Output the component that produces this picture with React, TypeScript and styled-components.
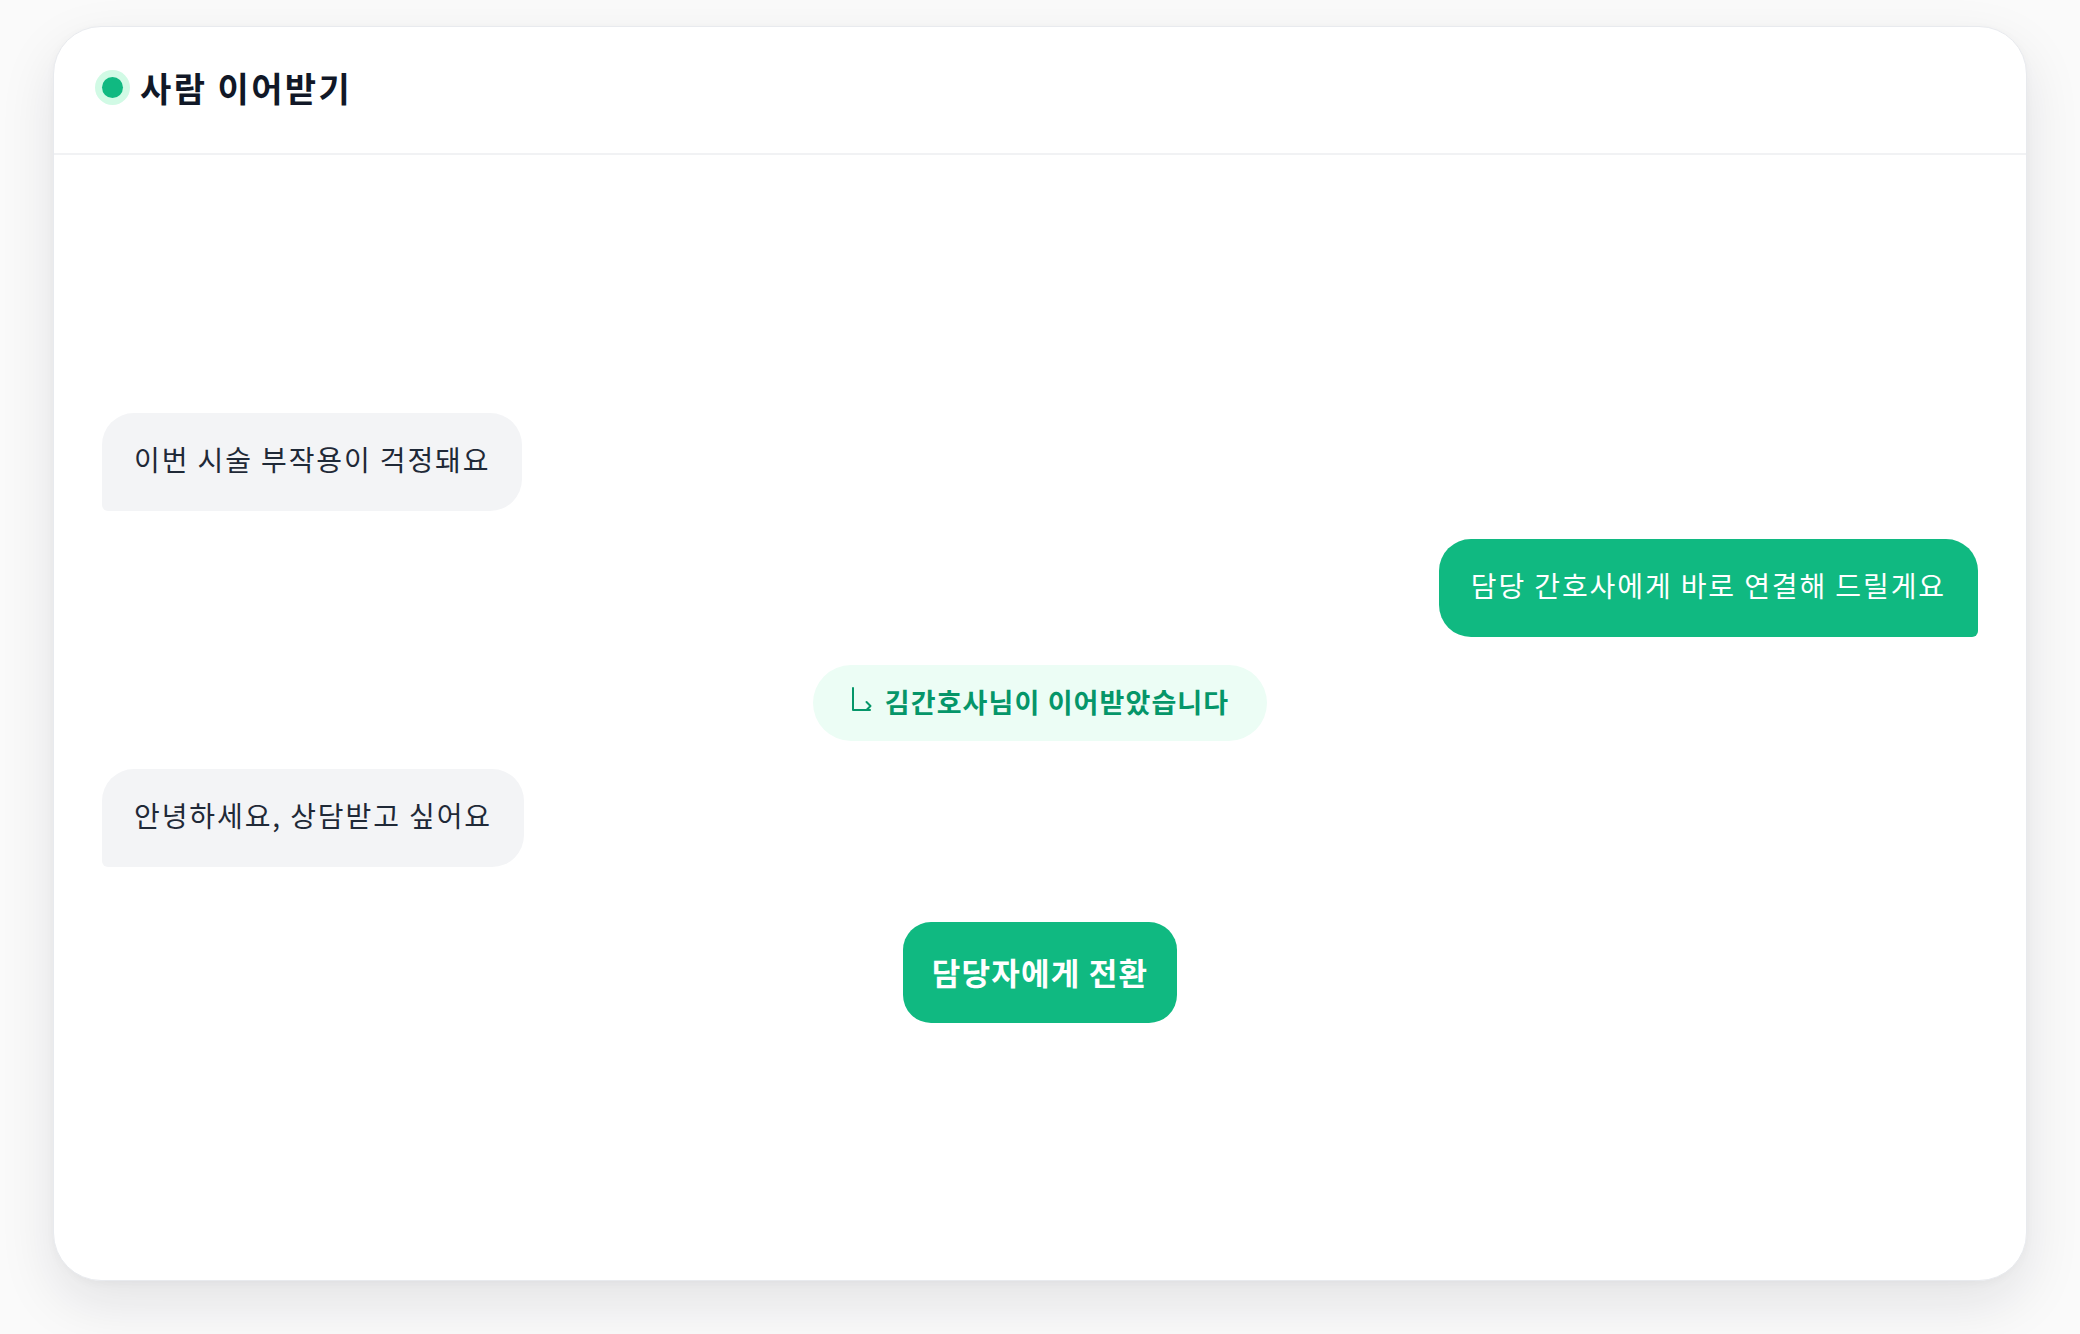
import styled, { createGlobalStyle } from "styled-components";

const GlobalStyle = createGlobalStyle`
  * {
    box-sizing: border-box;
  }

  body {
    margin: 0;
    background: #fafafa;
    font-family: "Noto Sans CJK KR", "Noto Sans", sans-serif;
    color: #1f2937;
  }
`;

type Side = "left" | "right";

const messages: { id: number; side: Side; text: string }[] = [
  { id: 1, side: "left", text: "이번 시술 부작용이 걱정돼요" },
  { id: 2, side: "right", text: "담당 간호사에게 바로 연결해 드릴게요" },
];

const HandoffArrow = () => (
  <svg width="22" height="26" viewBox="0 0 22 26" fill="none">
    <path
      d="M2 1v22h17"
      stroke="currentColor"
      strokeWidth="2"
      strokeLinecap="round"
      strokeLinejoin="round"
    />
    <path
      d="M15.5 19l4 4-4 4"
      stroke="currentColor"
      strokeWidth="2"
      strokeLinecap="round"
      strokeLinejoin="round"
      transform="translate(0 -4)"
    />
  </svg>
);

const App = () => {
  return (
    <Page>
      <GlobalStyle />
      <Card>
        <Header>
          <StatusDot />
          <Title>사람 이어받기</Title>
        </Header>
        <ChatBody>
          {messages.map((m) => (
            <Bubble key={m.id} $side={m.side}>
              {m.text}
            </Bubble>
          ))}
          <SystemNote>
            <HandoffArrow />
            김간호사님이 이어받았습니다
          </SystemNote>
          <Bubble $side="left">안녕하세요, 상담받고 싶어요</Bubble>
          <TransferButton type="button">담당자에게 전환</TransferButton>
        </ChatBody>
      </Card>
    </Page>
  );
};

export default App;

const Page = styled.div`
  padding: 26px 53px 53px;
`;

const Card = styled.div`
  height: 1255px;
  display: flex;
  flex-direction: column;
  background: #fff;
  border: 1px solid #e8eaee;
  border-radius: 48px;
  box-shadow: 0 22px 56px rgba(17, 24, 39, 0.1), 0 2px 10px rgba(17, 24, 39, 0.03);
  overflow: hidden;
`;

const Header = styled.div`
  height: 128px;
  flex-shrink: 0;
  display: flex;
  align-items: center;
  gap: 17px;
  padding: 0 48px 6px;
  border-bottom: 2px solid #f1f2f4;
`;

const StatusDot = styled.span`
  width: 21px;
  height: 21px;
  border-radius: 50%;
  background: #10b981;
  box-shadow: 0 0 0 7px #d1fae5;
`;

const Title = styled.h1`
  margin: 0;
  font-size: 34px;
  font-weight: 700;
  color: #111827;
  letter-spacing: 2.4px;
`;

const ChatBody = styled.div`
  flex: 1;
  display: flex;
  flex-direction: column;
  justify-content: center;
  gap: 28px;
  padding: 0 48px;
`;

const Bubble = styled.div<{ $side: Side }>`
  align-self: ${({ $side }) => ($side === "left" ? "flex-start" : "flex-end")};
  padding: 24px 32px 30px;
  font-size: 28px;
  line-height: 44px;
  letter-spacing: 1.9px;
  background: ${({ $side }) => ($side === "left" ? "#f3f4f6" : "#10b981")};
  color: ${({ $side }) => ($side === "left" ? "#1f2937" : "#fff")};
  border-radius: ${({ $side }) =>
    $side === "left" ? "32px 32px 32px 6px" : "32px 32px 6px 32px"};
`;

const SystemNote = styled.div`
  align-self: center;
  display: flex;
  align-items: center;
  gap: 12px;
  height: 76px;
  padding: 0 38px 3px;
  border-radius: 999px;
  background: #ecfdf5;
  color: #059669;
  font-size: 27px;
  font-weight: 700;
  letter-spacing: 1.1px;

  svg {
    margin-top: -3px;
  }
`;

const TransferButton = styled.button`
  align-self: center;
  margin-top: 27px;
  width: 274px;
  height: 101px;
  padding: 0 0 2px;
  border: none;
  border-radius: 28px;
  background: #10b981;
  color: #fff;
  font-family: inherit;
  font-size: 31px;
  font-weight: 700;
  letter-spacing: 1.2px;
  cursor: pointer;
`;
